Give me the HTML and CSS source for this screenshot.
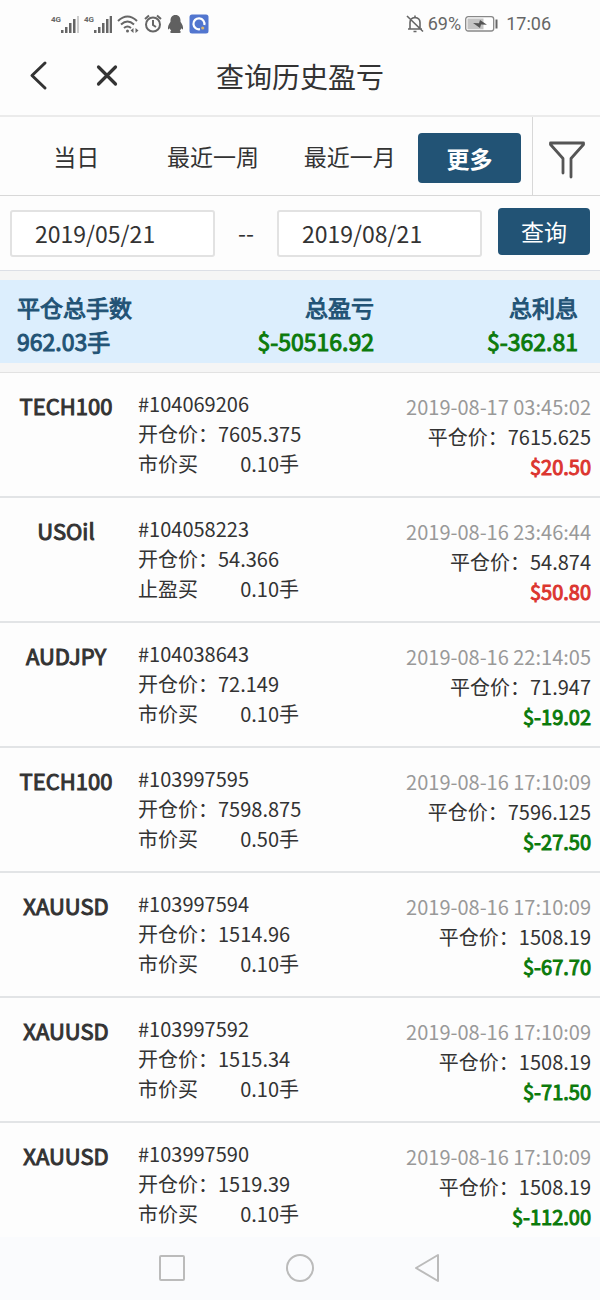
FILE: index.html
```html
<!DOCTYPE html>
<html lang="zh-CN">
<head>
<meta charset="utf-8">
<meta name="viewport" content="width=device-width, initial-scale=1">
<title>查询历史盈亏</title>
<link rel="stylesheet" href="styles.css">
</head>
<body>
<div class="app">
  <div class="status">
    <div class="status-group">
      <span class="network"><span class="network-type">4G</span><svg class="signal" width="18" height="18" viewBox="0 0 18 18"><path d="M0 15h2.500v3H0zM4 12h2.500v6H4zM8 8h2.500v10H8zM12 4h2.500v14H12z" fill="#666"/><path d="M16 1h2v17h-2z" fill="#ccc"/></svg></span>
      <span class="network"><span class="network-type">4G</span><svg class="signal" width="18" height="18" viewBox="0 0 18 18"><path d="M0 15h2.500v3H0zM4 12h2.500v6H4zM8 8h2.500v10H8zM12 4h2.500v14H12zM15.700 1H18v17h-2.300z" fill="#666"/></svg></span>
      <svg width="22" height="20" viewBox="0 0 22 20" fill="none" stroke="#666" stroke-width="2"><path d="M1 7Q10.500-2 20 7M4 10.500q6.500-6 13 0M7 14q3.500-3 7 0"/><circle cx="10.500" cy="17" r="1.500" fill="#666" stroke="none"/><path d="M13.500 16.500l3-2.500v5zM21.500 16.500l-3-2.500v5z" fill="#666" stroke="none"/></svg>
      <svg width="18" height="20" viewBox="0 0 18 20" fill="none" stroke="#666" stroke-width="2"><circle cx="9" cy="10.500" r="7"/><path d="M9 6v5l3 2M1 5l4-3.500M17 5l-4-3.500"/></svg>
      <svg width="17" height="20" viewBox="0 0 17 20" fill="#606060"><path d="M8.500 1C5 1 3.500 3.500 3.500 6.500v1.200C2 10 .5 12.500 1 15c.3.800 1 .3 1.700-.7.300 1 .8 1.800 1.500 2.500-1.200.500-1.500 2.200.3 2.200h8c1.800 0 1.500-1.700.3-2.200.700-.7 1.200-1.500 1.500-2.500.7 1 1.400 1.500 1.700.7.500-2.500-1-5-2.500-7.300V6.500C13.500 3.500 12 1 8.500 1z"/></svg>
      <svg width="20" height="20" viewBox="0 0 20 20"><rect x=".5" y=".5" width="19" height="19" rx="2.500" fill="#5276cf"/><path d="M11 15.200A5.500 5.500 0 1 1 15.300 11" fill="none" stroke="#fff" stroke-width="2.200"/><circle cx="13.700" cy="14" r="1.600" fill="#d8b56c"/></svg>
    </div>
    <div class="status-group status-right">
      <svg width="18" height="18" viewBox="0 0 18 18" fill="none" stroke="#666" stroke-width="1.600"><path d="M2 14h14M4 14V7.500Q4 3 9 2.500 14 3 14 7.500V14M9 2.500V.5M7.500 16.500h3M1 1l16 15.500"/></svg>
      <span>69%</span>
      <svg class="battery" width="33" height="16" viewBox="0 0 33 16"><rect x=".7" y=".7" width="28" height="14.300" rx="2.500" fill="#fff" stroke="#888" stroke-width="1.300"/><path d="M2.500 2.500h16v10.800h-16z" fill="#c4c4c4"/><path d="M30.500 3.500h2v9h-2z" fill="#666"/><path d="M8 7l6 .2 1-3.200 7 4.800-6-.2-1 3.400z" fill="#555"/></svg>
      <span>17:06</span>
    </div>
  </div>

  <header class="title-bar">
    <div class="title-actions">
      <button class="icon-button" type="button" aria-label="返回"><svg width="20" height="32" viewBox="0 0 20 32" fill="none" stroke="#333" stroke-width="3" stroke-linecap="round" stroke-linejoin="round"><path d="M17 3L4 15.500 17 28"/></svg></button>
      <button class="icon-button" type="button" aria-label="关闭"><svg width="24" height="24" viewBox="0 0 24 24" fill="none" stroke="#333" stroke-width="3.200" stroke-linecap="round"><path d="M3.500 3l17 17M20.500 3l-17 17"/></svg></button>
    </div>
    <h1 class="title">查询历史盈亏</h1>
  </header>

  <nav class="tabs" aria-label="时间范围">
    <div class="tab-list">
      <button class="tab" type="button">当日</button>
      <button class="tab" type="button">最近一周</button>
      <button class="tab" type="button">最近一月</button>
      <button class="tab tab-active" type="button">更多</button>
    </div>
    <button class="filter" type="button" aria-label="筛选"><svg width="36" height="38" viewBox="0 0 36 38" fill="none" stroke="#555" stroke-width="2.800" stroke-linecap="round" stroke-linejoin="round"><path d="M14 32V17.500L1.500 3.500V2h33v1.500L22 17.500V36"/></svg></button>
  </nav>

  <form class="query">
    <input class="date" type="text" value="2019/05/21" aria-label="开始日期">
    <span class="dash">--</span>
    <input class="date" type="text" value="2019/08/21" aria-label="结束日期">
    <button class="submit" type="button">查询</button>
  </form>

  <section class="summary">
    <div class="total"><span>平仓总手数</span><span>962.03手</span></div>
    <div class="total total-end"><span>总盈亏</span><span class="loss">$-50516.92</span></div>
    <div class="total total-end"><span>总利息</span><span class="loss">$-362.81</span></div>
  </section>

  <main class="trades">
    <article class="trade">
      <h2 class="symbol">TECH100</h2>
      <div class="open"><span>#104069206</span><span>开仓价：7605.375</span><span class="lots"><span>市价买</span><span>0.10手</span></span></div>
      <div class="close"><time>2019-08-17 03:45:02</time><span>平仓价：7615.625</span><strong class="gain">$20.50</strong></div>
    </article>
    <article class="trade">
      <h2 class="symbol">USOil</h2>
      <div class="open"><span>#104058223</span><span>开仓价：54.366</span><span class="lots"><span>止盈买</span><span>0.10手</span></span></div>
      <div class="close"><time>2019-08-16 23:46:44</time><span>平仓价：54.874</span><strong class="gain">$50.80</strong></div>
    </article>
    <article class="trade">
      <h2 class="symbol">AUDJPY</h2>
      <div class="open"><span>#104038643</span><span>开仓价：72.149</span><span class="lots"><span>市价买</span><span>0.10手</span></span></div>
      <div class="close"><time>2019-08-16 22:14:05</time><span>平仓价：71.947</span><strong class="loss">$-19.02</strong></div>
    </article>
    <article class="trade">
      <h2 class="symbol">TECH100</h2>
      <div class="open"><span>#103997595</span><span>开仓价：7598.875</span><span class="lots"><span>市价买</span><span>0.50手</span></span></div>
      <div class="close"><time>2019-08-16 17:10:09</time><span>平仓价：7596.125</span><strong class="loss">$-27.50</strong></div>
    </article>
    <article class="trade">
      <h2 class="symbol">XAUUSD</h2>
      <div class="open"><span>#103997594</span><span>开仓价：1514.96</span><span class="lots"><span>市价买</span><span>0.10手</span></span></div>
      <div class="close"><time>2019-08-16 17:10:09</time><span>平仓价：1508.19</span><strong class="loss">$-67.70</strong></div>
    </article>
    <article class="trade">
      <h2 class="symbol">XAUUSD</h2>
      <div class="open"><span>#103997592</span><span>开仓价：1515.34</span><span class="lots"><span>市价买</span><span>0.10手</span></span></div>
      <div class="close"><time>2019-08-16 17:10:09</time><span>平仓价：1508.19</span><strong class="loss">$-71.50</strong></div>
    </article>
    <article class="trade">
      <h2 class="symbol">XAUUSD</h2>
      <div class="open"><span>#103997590</span><span>开仓价：1519.39</span><span class="lots"><span>市价买</span><span>0.10手</span></span></div>
      <div class="close"><time>2019-08-16 17:10:09</time><span>平仓价：1508.19</span><strong class="loss">$-112.00</strong></div>
    </article>
  </main>

  <footer class="system-nav">
    <button class="icon-button" type="button" aria-label="最近任务"><svg width="28" height="32" viewBox="0 0 28 32" fill="none" stroke="#bbb" stroke-width="2"><rect x="2" y="4" width="24" height="24" rx="1"/></svg></button>
    <button class="icon-button" type="button" aria-label="主屏幕"><svg width="28" height="32" viewBox="0 0 28 32" fill="none" stroke="#bbb" stroke-width="2"><circle cx="14" cy="16" r="13"/></svg></button>
    <button class="icon-button" type="button" aria-label="系统返回"><svg width="28" height="32" viewBox="0 0 28 32" fill="none" stroke="#bbb" stroke-width="2" stroke-linejoin="round"><path d="M24 3v26L2 16z"/></svg></button>
  </footer>
</div>
</body>
</html>
```

FILE: styles.css
```css
* { box-sizing: border-box; }

body {
  margin: 0;
  background: #fdfdfd;
  color: #333;
  font-family: "Noto Sans CJK SC", sans-serif;
  font-size: 20px;
  line-height: 30px;
}

button, input { font: inherit; color: inherit; }
button { padding: 0; border: 0; background: none; }
h1, h2 { margin: 0; }
svg { display: block; flex: none; }

.app { display: flex; flex-direction: column; min-height: 100vh; }

.status {
  display: flex;
  justify-content: space-between;
  align-items: center;
  height: 48px;
  padding: 0 49px 0 51px;
  font-family: Roboto, sans-serif;
  font-size: 18px;
  color: #666;
}
.status-group { display: flex; align-items: center; gap: 5px; }
.status-right { gap: 4px; }
.battery { margin-right: 4px; }
.network { display: flex; align-items: flex-end; }
.network-type { width: 10px; font-size: 8px; line-height: 10px; font-weight: 700; align-self: flex-start; }

.title-bar {
  display: grid;
  grid-template-columns: 1fr auto 1fr;
  align-items: center;
  height: 69px;
  padding-bottom: 12px;
  border-bottom: 2px solid #ebebeb;
}
.title-actions { display: flex; align-items: center; gap: 47px; padding-left: 28px; }
.title { font-size: 28px; font-weight: 400; line-height: 40px; }
.icon-button { display: flex; }

.tabs { display: flex; height: 79px; border-bottom: 1px solid #d8d8d8; }
.tab-list {
  display: grid;
  grid-template-columns: 1fr 1fr 1fr 103px;
  align-items: center;
  flex: 1;
  padding: 4px 11px 0 8px;
}
.tab { padding-bottom: 4px; font-size: 23px; line-height: 46px; white-space: nowrap; }
.tab-active {
  padding-bottom: 0;
  border-radius: 4px;
  background: #225375;
  color: #fff;
  font-weight: 700;
  line-height: 50px;
}
.filter {
  display: flex;
  justify-content: center;
  align-items: center;
  width: 68px;
  padding-top: 8px;
  border-left: 1px solid #d8d8d8;
}

.query {
  display: flex;
  align-items: center;
  height: 75px;
  padding: 0 10px;
  border-bottom: 1px solid #dcdfe6;
}
.date {
  flex: 1;
  min-width: 0;
  height: 47px;
  padding: 0 23px 1px;
  border: 2px solid #e2e2e2;
  border-radius: 3px;
  background: #fff;
  font-size: 23px;
}
.dash { width: 62px; padding-bottom: 2px; font-size: 23px; text-align: center; }
.submit {
  width: 92px;
  height: 47px;
  margin: 0 0 4px 16px;
  border-radius: 4px;
  background: #225375;
  color: #fff;
  font-size: 23px;
}

.summary {
  display: grid;
  grid-template-columns: 3fr 4fr 4fr;
  padding: 10px 22px 5px 17px;
  border: solid #f5f5f5;
  border-width: 9px 0;
  background: #dceefd;
  color: #225375;
  font-size: 23px;
  line-height: 34px;
}
.total { display: flex; flex-direction: column; }
.total-end { text-align: right; }
.total, .symbol, .close strong { font-weight: 400; -webkit-text-stroke: 1px currentColor; }

.trades { border-top: 1px solid #e2e2e2; }
.trade {
  display: grid;
  grid-template-columns: 132px 161px 1fr;
  padding: 16px 9px 17px 0;
  border-bottom: 2px solid #e2e4e6;
}
.trade:last-child { padding-bottom: 8px; border-bottom: 0; }
.symbol { font-size: 22px; line-height: 32px; text-align: center; }
.open { display: flex; flex-direction: column; padding-left: 6px; margin-right: -6px; white-space: nowrap; }
.lots { display: flex; justify-content: space-between; }
.close { display: flex; flex-direction: column; padding-top: 3px; margin-bottom: -3px; text-align: right; }
.close time { color: #999; }
.gain { color: #dc352f; }
.loss { color: #0b7a0b; }

.system-nav {
  display: flex;
  justify-content: center;
  align-items: center;
  gap: 100px;
  flex: 1;
  min-height: 62px;
  padding-bottom: 2px;
  background: #fafbfd;
}
```
